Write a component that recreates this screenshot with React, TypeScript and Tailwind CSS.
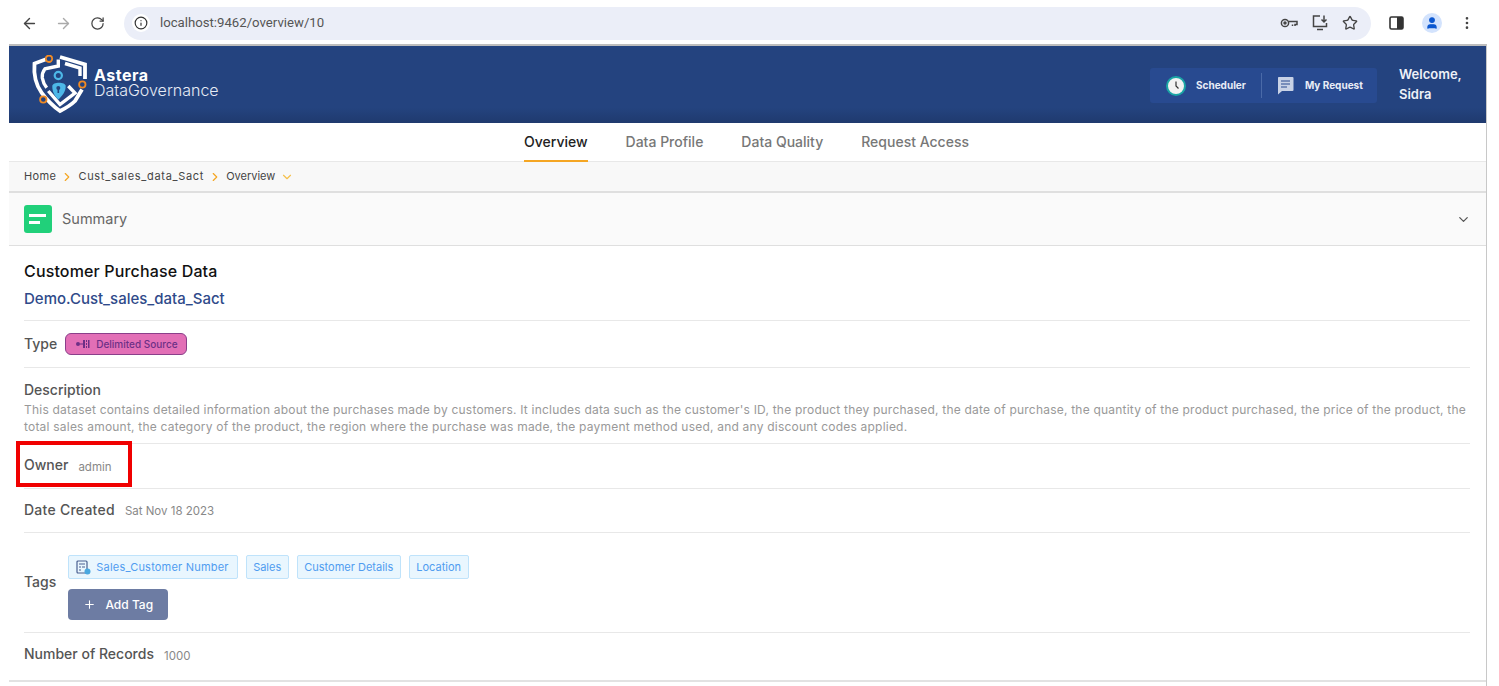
import { ArrowLeft, ArrowRight, RotateCw, Info, Star, MoreVertical, User, ChevronRight, ChevronDown, Plus } from 'lucide-react';

const tabs = ['Overview', 'Data Profile', 'Data Quality', 'Request Access'];
const tags = ['Sales', 'Customer Details', 'Location'];

const Logo = () => (
  <svg width="58" height="60" viewBox="0 0 58 60" fill="none">
    <path d="M16.7 4 L4.5 8.5 C3.5 20 6 30 11.7 37.8 C17 45 23 51 30 56 C36 53 41 50 45 46 L52 34.5" stroke="#fff" strokeWidth="3.8" />
    <path d="M30 2 L55 9.5 V24" stroke="#fff" strokeWidth="3.8" />
    <path d="M28.3 4.5 V11 L15 13.8 C12.5 17 12 20 12.3 23 C13 27 14.5 30 16.7 32.8" stroke="#fff" strokeWidth="3.4" />
    <path d="M35 8.5 L50 13 V21" stroke="#fff" strokeWidth="3.4" />
    <path d="M18.3 36 L30 49.5 L45 38 L38.3 31" stroke="#fff" strokeWidth="3.4" />
    <circle cx="28.3" cy="20.5" r="3.6" stroke="#4db8e8" strokeWidth="2.2" />
    <path d="M22.3 31 C22.3 26.5 35.7 26.5 35.7 31 C35.7 37 32 41 28.3 44.5 C24.6 41 22.3 37 22.3 31Z" fill="#4db8e8" />
    <circle cx="28.3" cy="33" r="2" fill="#24437f" />
    <path d="M28.3 33 V38" stroke="#24437f" strokeWidth="1.6" />
    <circle cx="19" cy="3.8" r="3.2" fill="#24437f" stroke="#f08a24" strokeWidth="1.8" />
    <circle cx="52.3" cy="29.5" r="3.2" fill="#24437f" stroke="#f08a24" strokeWidth="1.8" />
    <circle cx="13.3" cy="44.5" r="3.2" fill="#24437f" stroke="#f08a24" strokeWidth="1.8" />
  </svg>
);

const Divider = () => <div className="h-px bg-[#e8e8e8]" />;

const Field = ({ label, value, height, labelClass = '' }: { label: string; value: string; height: string; labelClass?: string }) => (
  <div className={`flex items-center ${height}`}>
    <span className={`-mt-[3px] text-[14px] font-medium text-[#555] ${labelClass}`}>{label}</span>
    <span className="ml-[10px] mt-[3px] text-[11.5px] text-[#888]">{value}</span>
  </div>
);

export default function App() {
  return (
    <div className="relative h-[686px] w-[1499px] overflow-hidden bg-white font-['Inter',sans-serif]">
      {/* browser toolbar */}
      <div className="flex h-[44px] items-center pl-[21px] pr-[24px] pt-[2px]">
        <ArrowLeft className="h-[17px] w-[17px] text-[#444]" />
        <ArrowRight className="ml-[17px] h-[17px] w-[17px] text-[#aaa]" />
        <RotateCw className="ml-[18px] h-[15px] w-[15px] text-[#444]" />
        <div className="ml-[19px] flex h-[33px] w-[1249px] items-center rounded-full bg-[#ebeef8] pl-[8px] pr-[13px]">
          <span className="flex h-[18px] w-[18px] items-center justify-center rounded-full bg-white">
            <Info className="h-[14px] w-[14px] text-[#333]" />
          </span>
          <span className="ml-[10px] font-['Roboto',sans-serif] text-[13.2px] text-[#555]">localhost:9462/overview/10</span>
          <div className="ml-auto flex items-center gap-[13px] text-[#444]">
            <svg width="18" height="10" viewBox="0 0 18 10" fill="none" stroke="currentColor" strokeWidth="1.5">
              <circle cx="5" cy="5" r="3.6" />
              <circle cx="5" cy="5" r="1" fill="currentColor" />
              <path d="M8.6 3.6H17V6.4H15V8M12.5 6.4V8" />
            </svg>
            <svg width="18" height="18" viewBox="0 0 18 18" fill="none" stroke="currentColor" strokeWidth="1.5">
              <path d="M9 2H2.5v10.5h13V9" />
              <path d="M6 15.5h6M13 1.5v6M10.5 5.5l2.5 2.5 2.5-2.5" />
            </svg>
            <Star className="h-[16px] w-[16px]" />
          </div>
        </div>
        <svg className="ml-[18px]" width="15" height="14" viewBox="0 0 15 14">
          <rect x="1" y="1" width="13" height="12" rx="1.5" fill="none" stroke="#333" strokeWidth="1.6" />
          <rect x="8" y="1" width="6" height="12" fill="#333" />
        </svg>
        <span className="ml-[18px] flex h-[20px] w-[20px] items-center justify-center rounded-full bg-[#d3e3fd]">
          <User className="h-[14px] w-[14px] fill-[#0b57d0] text-[#0b57d0]" />
        </span>
        <MoreVertical className="ml-[17px] h-[16px] w-[16px] text-[#444]" />
      </div>

      {/* app frame */}
      <div className="ml-[9px] h-[642px] w-[1478px] border-t-2 border-r border-[#c8c8c8] border-t-[#bdbdbd]">
        <header className="flex h-[77px] items-center bg-gradient-to-b from-[#24437f] from-80% to-[#1f3a6e] pl-[21px] pr-[22px]">
          <Logo />
          <div className="ml-[6px] -mt-[3px] flex flex-col text-white">
            <span className="text-[16px] leading-[14px] font-bold tracking-[0.5px]">Astera</span>
            <span className="text-[16px] leading-[16px] font-light text-[#e6ebf5]">DataGovernance</span>
          </div>
          <div className="ml-auto mt-[2px] flex h-[35px] w-[227px] items-center rounded-[3px] bg-[#284a90]">
            <span className="ml-[16px] flex h-[20px] w-[20px] items-center justify-center rounded-full border-2 border-[#1aa5a5] bg-[#f2f2f2]">
              <svg width="11" height="11" viewBox="0 0 11 11" fill="none" stroke="#333" strokeWidth="1.2">
                <path d="M5 1.5V6l2.5 2.5" />
              </svg>
            </span>
            <span className="ml-[10px] text-[10px] font-bold text-[#e8edf7]">Scheduler</span>
            <div className="ml-[15px] h-[25px] w-px bg-[#4a6aa8]" />
            <svg className="ml-[15px]" width="17" height="19" viewBox="0 0 17 19">
              <path d="M1.5 1h14a1 1 0 0 1 1 1v12a1 1 0 0 1-1 1H5l-4 3.5V2a1 1 0 0 1 .5-1Z" fill="#c8d2e6" />
              <path d="M4 5h9M4 8h9M4 11h6" stroke="#284a90" strokeWidth="1.2" />
            </svg>
            <span className="ml-[11px] text-[10px] font-bold text-[#e8edf7]">My Request</span>
          </div>
          <div className="ml-[22px] -mt-[2px] w-[65px] text-[13px] leading-[20px] font-semibold text-[#eef1f8]">
            Welcome,
            <br />
            Sidra
          </div>
        </header>

        {/* tabs */}
        <nav className="flex h-[39px] justify-center gap-[38px] border-b border-[#e8e8e8] pr-[2px]">
          {tabs.map((tab, i) => (
            <div
              key={tab}
              className={`flex h-[39px] items-center border-b-2 text-[14px] font-medium ${
                i === 0 ? 'border-[#f5a623] text-[#222]' : 'border-transparent text-[#777]'
              }`}
            >
              {tab}
            </div>
          ))}
        </nav>

        {/* breadcrumb */}
        <div className="flex h-[31px] items-center border-b-2 border-[#dfdfdf] bg-[#f8f8f8] pl-[15px] text-[11px] text-[#444]">
          <span className="tracking-[0.4px]">Home</span>
          <ChevronRight className="mx-[4px] h-[14px] w-[14px] text-[#f5a623]" />
          <span className="tracking-[0.7px]">Cust_sales_data_Sact</span>
          <ChevronRight className="mx-[4px] h-[14px] w-[14px] text-[#f5a623]" />
          <span>Overview</span>
          <ChevronDown className="ml-[5px] h-[14px] w-[14px] text-[#f5c04c]" />
        </div>

        {/* summary bar */}
        <div className="flex h-[53px] items-center border-b border-[#dfdfdf] bg-[#fafafa] pl-[15px] pr-[15px]">
          <span className="flex h-[28px] w-[28px] flex-col justify-center gap-[4px] rounded-[3px] bg-[#21d07a] pl-[5px]">
            <span className="h-[3px] w-[17px] bg-white" />
            <span className="h-[3px] w-[11px] bg-white" />
          </span>
          <span className="ml-[10px] text-[14.5px] text-[#666]">Summary</span>
          <ChevronDown className="ml-auto h-[15px] w-[15px] text-[#555]" />
        </div>

        {/* details */}
        <div className="pl-[15px] pr-[16px]">
          <div className="flex h-[74px] flex-col pt-[15px]">
            <span className="text-[16px] leading-[20px] font-medium tracking-[0.15px] text-[#111]">Customer Purchase Data</span>
            <span className="mt-[9px] text-[15px] leading-[18px] font-medium text-[#2f4a8a]">Demo.Cust_sales_data_Sact</span>
          </div>
          <Divider />
          <div className="flex h-[46px] items-center">
            <span className="-mt-[2px] text-[14px] font-medium text-[#555]">Type</span>
            <span className="ml-[8px] flex h-[22px] w-[122px] items-center rounded-[6px] border border-[#8a3f8a] bg-[#e26fb6] pl-[9px] text-[10px] font-medium text-[#6d2f86]">
              <svg width="16" height="10" viewBox="0 0 16 10" fill="#6d2f86">
                <circle cx="3" cy="5" r="2" />
                <path d="M5 4.5h3v1H5zM8 1h2v8H8zM11 1h1v2h-1zM11 4h1v2h-1zM11 7h1v2h-1zM13 1h1.5v8H13z" />
              </svg>
              <span className="ml-[5px]">Delimited Source</span>
            </span>
          </div>
          <Divider />
          <div className="flex h-[75px] flex-col pt-[12px]">
            <span className="text-[14px] leading-[19px] font-medium text-[#555]">Description</span>
            <p className="mt-[2px] text-[12px] leading-[17px] tracking-[0.21px] text-[#999]">
              This dataset contains detailed information about the purchases made by customers. It includes data such as the customer's ID, the product they purchased, the date of purchase, the quantity of the product purchased, the price of the product, the total sales amount, the category of the product, the region where the purchase was made, the payment method used, and any discount codes applied.
            </p>
          </div>
          <Divider />
          <Field label="Owner" value="admin" height="h-[44px]" />
          <Divider />
          <Field label="Date Created" value="Sat Nov 18 2023" height="h-[43px]" labelClass="tracking-[0.25px]" />
          <Divider />
          <div className="flex h-[99px] pt-[22px]">
            <span className="-mt-[3px] self-center pb-[22px] text-[14px] font-medium text-[#555]">Tags</span>
            <div className="ml-[12px] flex flex-col gap-[10px]">
              <div className="flex gap-[8px]">
                <span className="flex h-[24px] items-center rounded-[2px] border border-[#bfe3fb] bg-[#e9f6fe] pl-[7px] pr-[8px] text-[11px] tracking-[0.2px] text-[#4f9cf0]">
                  <svg className="mr-[5px]" width="15" height="15" viewBox="0 0 15 15" fill="none">
                    <rect x="1" y="1" width="10" height="12" rx="1" stroke="#4a5f90" strokeWidth="1.2" />
                    <path d="M3 4h6M3 7h2M6 7h3M3 10h2" stroke="#4a5f90" strokeWidth="1.2" />
                    <circle cx="11.5" cy="11.5" r="3" fill="#4aa8e0" />
                  </svg>
                  Sales_Customer Number
                </span>
                {tags.map((tag) => (
                  <span key={tag} className="flex h-[24px] items-center rounded-[2px] border border-[#bfe3fb] bg-[#e9f6fe] px-[6.5px] text-[11px] text-[#4f9cf0]">
                    {tag}
                  </span>
                ))}
              </div>
              <button className="flex h-[31px] w-[100px] items-center justify-center rounded-[4px] bg-[#6d7ca3] text-[12px] font-medium text-white">
                <Plus className="mr-[9px] h-[13px] w-[13px]" />
                Add Tag
              </button>
            </div>
          </div>
          <Divider />
          <Field label="Number of Records" value="1000" height="h-[44px]" />
        </div>
        <div className="mt-[3px] h-[2px] bg-[#e2e2e2]" />
      </div>

      {/* annotation round the owner row */}
      <div className="absolute left-[16px] top-[441px] h-[46px] w-[116px] border-[4px] border-[#f00000]" />
    </div>
  );
}
